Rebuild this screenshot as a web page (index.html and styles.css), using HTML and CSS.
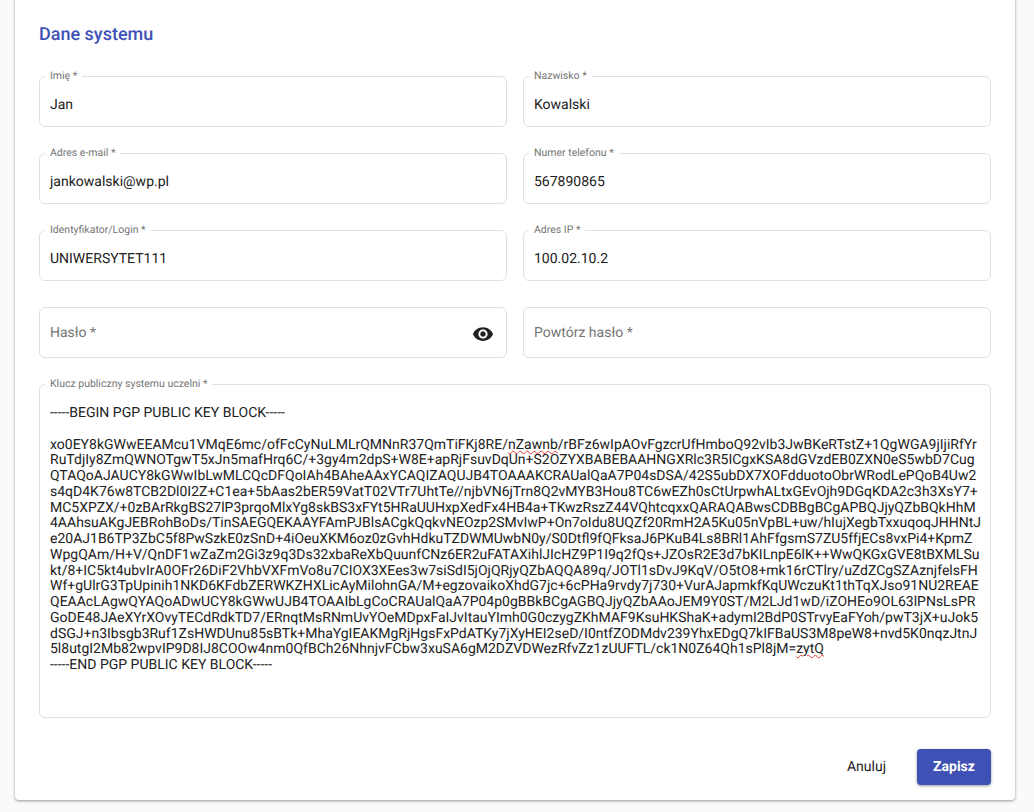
FILE: index.html
```html
<!DOCTYPE html>
<html lang="pl">
<head>
<meta charset="utf-8">
<title>Dane systemu</title>
<link rel="stylesheet" href="styles.css">
</head>
<body>
<main class="card">
  <h2 class="title">Dane systemu</h2>
  <form class="grid">
    <div class="field"><span class="label">Imię *</span><span class="value">Jan</span></div>
    <div class="field"><span class="label">Nazwisko *</span><span class="value">Kowalski</span></div>
    <div class="field"><span class="label">Adres e-mail *</span><span class="value">jankowalski@wp.pl</span></div>
    <div class="field"><span class="label">Numer telefonu *</span><span class="value">567890865</span></div>
    <div class="field"><span class="label">Identyfikator/Login *</span><span class="value">UNIWERSYTET111</span></div>
    <div class="field"><span class="label">Adres IP *</span><span class="value">100.02.10.2</span></div>
    <div class="field"><span class="placeholder">Hasło *</span>
      <svg class="eye" viewBox="0 0 24 24" width="22" height="22" aria-hidden="true"><path d="M12 4.5C7 4.5 2.73 7.61 1 12c1.73 4.39 6 7.5 11 7.5s9.27-3.11 11-7.5c-1.73-4.39-6-7.5-11-7.5zM12 17c-2.76 0-5-2.24-5-5s2.24-5 5-5 5 2.24 5 5-2.24 5-5 5zm0-8c-1.66 0-3 1.34-3 3s1.34 3 3 3 3-1.34 3-3-1.34-3-3-3z"/></svg>
    </div>
    <div class="field"><span class="placeholder">Powtórz hasło *</span></div>
    <div class="field field-key">
      <span class="label">Klucz publiczny systemu uczelni *</span>
      <div class="key">
        <div class="line">-----BEGIN PGP PUBLIC KEY BLOCK-----</div>
        <div class="line line-blank"></div>
        <div class="line">xo0EY8kGWwEEAMcu1VMqE6mc/ofFcCyNuLMLrQMNnR37QmTiFKj8RE/<span class="typo">nZawnb</span>/rBFz6wIpAOvFgzcrUfHmboQ92vIb3JwBKeRTstZ+1QgWGA9jIjiRfYr</div>
        <div class="line">RuTdjIy8ZmQWNOTgwT5xJn5mafHrq6C/+3gy4m2dpS+W8E+apRjFsuvDqUn+S2OZYXBABEBAAHNGXRlc3R5ICgxKSA8dGVzdEB0ZXN0eS5wbD7Cug</div>
        <div class="line">QTAQoAJAUCY8kGWwIbLwMLCQcDFQoIAh4BAheAAxYCAQIZAQUJB4TOAAAKCRAUalQaA7P04sDSA/42S5ubDX7XOFdduotoObrWRodLePQoB4Uw2</div>
        <div class="line">s4qD4K76w8TCB2Dl0I2Z+C1ea+5bAas2bER59VatT02VTr7UhtTe//njbVN6jTrn8Q2vMYB3Hou8TC6wEZh0sCtUrpwhALtxGEvOjh9DGqKDA2c3h3XsY7+</div>
        <div class="line">MC5XPZX/+0zBArRkgBS27lP3prqoMlxYg8skBS3xFYt5HRaUUHxpXedFx4HB4a+TKwzRszZ44VQhtcqxxQARAQABwsCDBBgBCgAPBQJjyQZbBQkHhM</div>
        <div class="line">4AAhsuAKgJEBRohBoDs/TinSAEGQEKAAYFAmPJBlsACgkQqkvNEOzp2SMvIwP+On7oIdu8UQZf20RmH2A5Ku05nVpBL+uw/hIujXegbTxxuqoqJHHNtJ</div>
        <div class="line">e20AJ1B6TP3ZbC5f8PwSzkE0zSnD+4iOeuXKM6oz0zGvhHdkuTZDWMUwbN0y/S0Dtfl9fQFksaJ6PKuB4Ls8BRl1AhFfgsmS7ZU5ffjECs8vxPi4+KpmZ</div>
        <div class="line">WpgQAm/H+V/QnDF1wZaZm2Gi3z9q3Ds32xbaReXbQuunfCNz6ER2uFATAXihlJIcHZ9P1I9q2fQs+JZOsR2E3d7bKILnpE6lK++WwQKGxGVE8tBXMLSu</div>
        <div class="line">kt/8+IC5kt4ubvIrA0OFr26DiF2VhbVXFmVo8u7CIOX3XEes3w7siSdI5jOjQRjyQZbAQQA89q/JOTl1sDvJ9KqV/O5tO8+mk16rCTlry/uZdZCgSZAznjfelsFH</div>
        <div class="line">Wf+gUlrG3TpUpinih1NKD6KFdbZERWKZHXLicAyMilohnGA/M+egzovaikoXhdG7jc+6cPHa9rvdy7j730+VurAJapmkfKqUWczuKt1thTqXJso91NU2REAE</div>
        <div class="line">QEAAcLAgwQYAQoADwUCY8kGWwUJB4TOAAIbLgCoCRAUalQaA7P04p0gBBkBCgAGBQJjyQZbAAoJEM9Y0ST/M2LJd1wD/iZOHEo9OL63lPNsLsPR</div>
        <div class="line">GoDE48JAeXYrXOvyTECdRdkTD7/ERnqtMsRNmUvYOeMDpxFaIJvItauYImh0G0czygZKhMAF9KsuHKShaK+adymI2BdP0STrvyEaFYoh/pwT3jX+uJok5</div>
        <div class="line">dSGJ+n3Ibsgb3Ruf1ZsHWDUnu85sBTk+MhaYgIEAKMgRjHgsFxPdATKy7jXyHEI2seD/I0ntfZODMdv239YhxEDgQ7kIFBaUS3M8peW8+nvd5K0nqzJtnJ</div>
        <div class="line">5l8utgI2Mb82wpvIP9D8IJ8COOw4nm0QfBCh26NhnjvFCbw3xuSA6gM2DZVDWezRfvZz1zUUFTL/ck1N0Z64Qh1sPl8jM=<span class="typo">zytQ</span></div>
        <div class="line">-----END PGP PUBLIC KEY BLOCK-----</div>
      </div>
    </div>
  </form>
  <div class="actions">
    <button type="button" class="btn btn-text">Anuluj</button>
    <button type="button" class="btn btn-primary">Zapisz</button>
  </div>
</main>
</body>
</html>
```

FILE: styles.css
```css
* {
  box-sizing: border-box;
}

html,
body {
  height: 812px;
  margin: 0;
  overflow: hidden;
}

body {
  background: #fafafa;
  color: #212121;
  font-family: Roboto, "Liberation Sans", sans-serif;
  font-size: 14px;
  text-rendering: geometricPrecision;
}

.card {
  width: 1000px;
  margin: -8px 0 0 15px;
  padding: 32px 24px 15px;
  background: #fff;
  border-radius: 4px;
  box-shadow: 0 1px 3px rgba(0, 0, 0, 0.4);
}

.title {
  margin: 0 0 32px;
  color: #3f51b5;
  font-size: 18px;
  font-weight: 500;
  line-height: 21px;
}

.grid {
  display: grid;
  grid-template-columns: 468px 468px;
  column-gap: 16px;
  row-gap: 26px;
  margin-top: -1px;
}

.field {
  position: relative;
  display: flex;
  align-items: center;
  justify-content: space-between;
  height: 51px;
  padding: 0 10px;
  border: 1px solid #e0e0e0;
  border-radius: 6px;
}

.label {
  position: absolute;
  top: -7px;
  left: 5px;
  padding: 0 5px;
  background: #fff;
  color: #757575;
  font-size: 10.5px;
  line-height: 12px;
}

.value {
  padding-top: 7px;
}

.placeholder {
  color: #757575;
}

.eye {
  margin: 2px 2px 0 0;
  fill: #212121;
}

.field-key {
  grid-column: 1 / -1;
  display: block;
  height: 334px;
  padding-top: 21px;
}

.line {
  min-height: 15.75px;
  line-height: 15.75px;
  white-space: pre;
}

.typo {
  text-decoration: underline wavy #e53935 1px;
}

.actions {
  display: flex;
  align-items: center;
  justify-content: flex-end;
  gap: 16px;
  margin-top: 31px;
}

.btn {
  height: 36px;
  border: 0;
  border-radius: 4px;
  font-family: inherit;
  font-size: 14px;
  text-rendering: inherit;
}

.btn-text {
  padding: 0 15px;
  background: transparent;
  color: #212121;
  font-weight: 400;
}

.btn-primary {
  width: 74px;
  background: #3f51b5;
  color: #fff;
  font-weight: 700;
  box-shadow: 0 1px 3px rgba(0, 0, 0, 0.4);
}
```
